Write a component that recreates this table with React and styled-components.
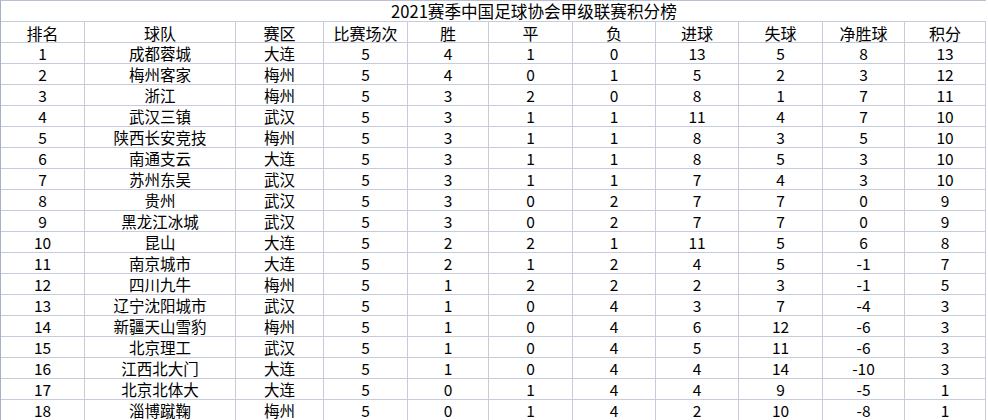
import React from 'react';
import styled, { createGlobalStyle } from 'styled-components';

const GlobalStyle = createGlobalStyle`
  html, body {
    margin: 0;
    padding: 0;
    background: #ffffff;
  }
  body {
    font-family: "Noto Sans CJK SC", "Liberation Sans", sans-serif;
    color: #000000;
  }
`;

const columns = [84, 151, 88, 84, 81, 84, 83, 83, 84, 82, 81];

const Sheet = styled.div`
  display: grid;
  grid-template-columns: ${columns.map((w) => `${w}px`).join(' ')};
  grid-auto-rows: 21px;
  border-left: 1px solid #a7afc4;
  border-top: 1px solid #b9c0d2;
  width: max-content;
  height: 420px;
  overflow: hidden;
  box-sizing: border-box;
`;

const TitleCell = styled.div`
  grid-column: 1 / -1;
  display: flex;
  align-items: center;
  padding-left: 390px;
  font-size: 16.6px;
  line-height: 1;
  border-bottom: 1px solid #c6ccdc;
  box-sizing: border-box;
  white-space: nowrap;
`;

const Cell = styled.div`
  display: flex;
  align-items: center;
  justify-content: center;
  font-size: ${(p) => (p.$head ? '16px' : '15.5px')};
  line-height: 1;
  padding-top: 1px;
  border-right: 1px solid #c6ccdc;
  border-bottom: 1px solid #c6ccdc;
  box-sizing: border-box;
  white-space: nowrap;
`;

const headers = ['排名', '球队', '赛区', '比赛场次', '胜', '平', '负', '进球', '失球', '净胜球', '积分'];

const rows = [
  [1, '成都蓉城', '大连', 5, 4, 1, 0, 13, 5, 8, 13],
  [2, '梅州客家', '梅州', 5, 4, 0, 1, 5, 2, 3, 12],
  [3, '浙江', '梅州', 5, 3, 2, 0, 8, 1, 7, 11],
  [4, '武汉三镇', '武汉', 5, 3, 1, 1, 11, 4, 7, 10],
  [5, '陕西长安竞技', '梅州', 5, 3, 1, 1, 8, 3, 5, 10],
  [6, '南通支云', '大连', 5, 3, 1, 1, 8, 5, 3, 10],
  [7, '苏州东吴', '武汉', 5, 3, 1, 1, 7, 4, 3, 10],
  [8, '贵州', '武汉', 5, 3, 0, 2, 7, 7, 0, 9],
  [9, '黑龙江冰城', '武汉', 5, 3, 0, 2, 7, 7, 0, 9],
  [10, '昆山', '大连', 5, 2, 2, 1, 11, 5, 6, 8],
  [11, '南京城市', '大连', 5, 2, 1, 2, 4, 5, -1, 7],
  [12, '四川九牛', '梅州', 5, 1, 2, 2, 2, 3, -1, 5],
  [13, '辽宁沈阳城市', '武汉', 5, 1, 0, 4, 3, 7, -4, 3],
  [14, '新疆天山雪豹', '梅州', 5, 1, 0, 4, 6, 12, -6, 3],
  [15, '北京理工', '武汉', 5, 1, 0, 4, 5, 11, -6, 3],
  [16, '江西北大门', '大连', 5, 1, 0, 4, 4, 14, -10, 3],
  [17, '北京北体大', '大连', 5, 0, 1, 4, 4, 9, -5, 1],
  [18, '淄博蹴鞠', '梅州', 5, 0, 1, 4, 2, 10, -8, 1],
];

export default function App() {
  return (
    <>
      <GlobalStyle />
      <Sheet>
        <TitleCell>2021赛季中国足球协会甲级联赛积分榜</TitleCell>
        {headers.map((h) => (
          <Cell key={h} $head>
            {h}
          </Cell>
        ))}
        {rows.map((row) =>
          row.map((v, i) => <Cell key={`${row[0]}-${i}`}>{v}</Cell>)
        )}
      </Sheet>
    </>
  );
}
